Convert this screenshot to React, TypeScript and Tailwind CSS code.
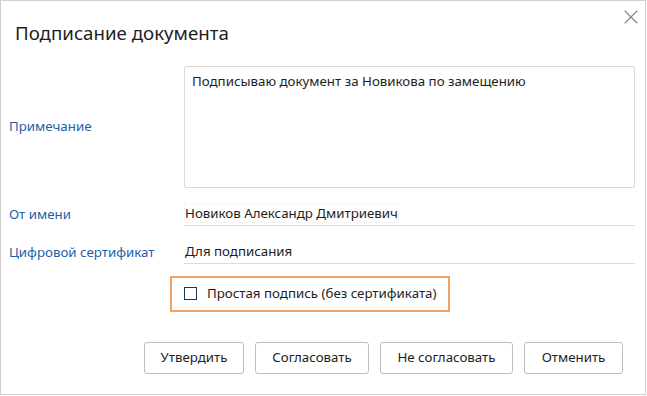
import { X } from 'lucide-react';

const buttons = [
    { label: 'Утвердить', width: 'w-[100px]' },
    { label: 'Согласовать', width: 'w-[114px]' },
    { label: 'Не согласовать', width: 'w-[133px]' },
    { label: 'Отменить', width: 'w-[99px]' },
];

export default function App() {
    return (
        <div className="h-[396px] w-[647px] bg-white font-['Noto_Sans',sans-serif] text-[13.3px] text-[#1e1e1e]">
            <div className="relative flex h-[395px] w-[646px] flex-col border border-[#cfcfcf]">
                <button className="absolute top-[4px] right-[2px] text-[#858585]">
                    <X className="size-[24px]" strokeWidth={1.1} />
                </button>

                <h1 className="mt-[18px] ml-[14px] text-[18.7px] leading-[28px] text-[#1e1e1e]">
                    Подписание документа
                </h1>

                <div className="mt-[19px] flex items-center">
                    <div className="w-[183px] pl-[8px] text-[#1d5ea8]">Примечание</div>
                    <div className="h-[122px] w-[451px] rounded-[2px] border border-[#dadada] px-[7px] py-[5px] leading-[18px]">
                        Подписываю документ за Новикова по замещению
                    </div>
                </div>

                <div className="mt-[16px] flex items-center">
                    <div className="w-[183px] pl-[8px] text-[#1d5ea8]">От имени</div>
                    <div className="w-[451px] border-b border-[#dcdcdc] pb-[1px] pl-[1px]">
                        <span className="outline-1 outline-dotted outline-[#ececec]">
                            Новиков Александр Дмитриевич
                        </span>
                    </div>
                </div>

                <div className="mt-[16px] flex items-center">
                    <div className="w-[183px] pl-[8px] text-[#1d5ea8]">Цифровой сертификат</div>
                    <div className="w-[451px] border-b border-[#dcdcdc] pb-[1px] pl-[1px]">
                        Для подписания
                    </div>
                </div>

                <div className="mt-[12px] ml-[169px] flex h-[36px] w-[280px] items-center gap-[10px] border-2 border-[#f0a460] pl-[12px]">
                    <span className="size-[13px] border border-[#1d3557]" />
                    <span>Простая подпись (без сертификата)</span>
                </div>

                <div className="mt-[30px] ml-[143px] flex gap-[11px]">
                    {buttons.map((b) => (
                        <button
                            key={b.label}
                            className={`${b.width} h-[32px] rounded-[3px] border border-[#bdbdbd] bg-white text-[13.3px]`}
                        >
                            {b.label}
                        </button>
                    ))}
                </div>
            </div>
        </div>
    );
}
